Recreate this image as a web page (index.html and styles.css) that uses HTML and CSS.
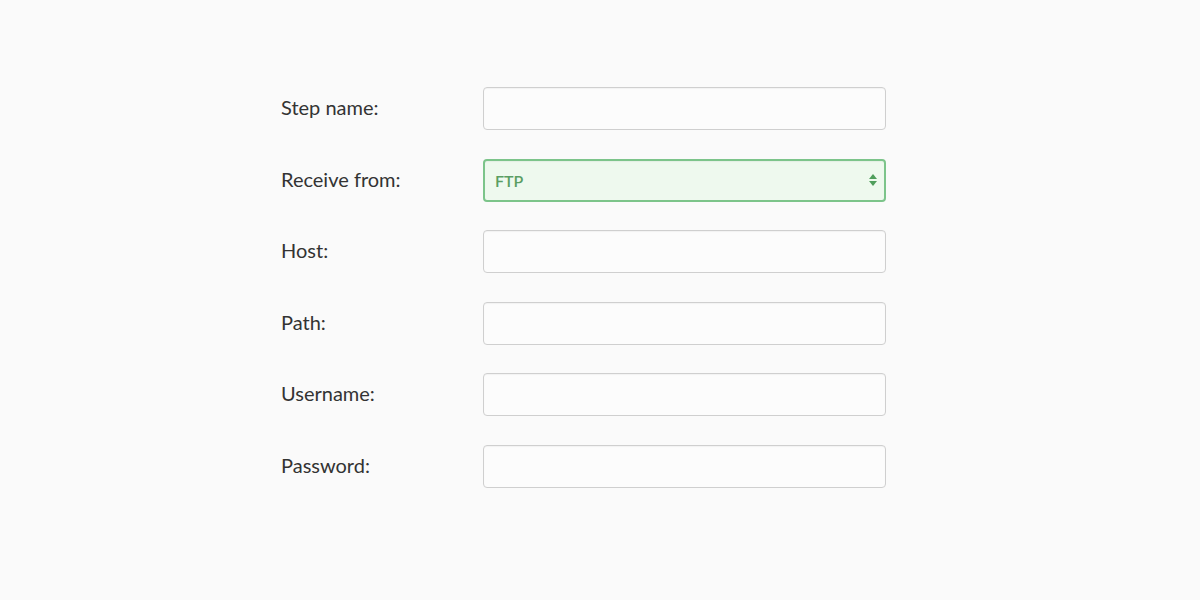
FILE: index.html
```html
<!DOCTYPE html>
<html>
<head>
<meta charset="utf-8">
<link rel="stylesheet" href="styles.css">
</head>
<body>
<form class="form">
  <label class="label">Step name:</label>
  <div class="field"></div>
  <label class="label">Receive from:</label>
  <div class="field select"><span class="value">FTP</span>
    <svg class="arrows" width="8" height="12" viewBox="0 0 8 12"><path d="M4 0 L8 5 L0 5 Z" fill="#4f9e5b"/><path d="M0 7 L8 7 L4 12 Z" fill="#4f9e5b"/></svg>
  </div>
  <label class="label">Host:</label>
  <div class="field"></div>
  <label class="label">Path:</label>
  <div class="field"></div>
  <label class="label">Username:</label>
  <div class="field"></div>
  <label class="label">Password:</label>
  <div class="field"></div>
</form>
</body>
</html>
```
FILE: styles.css
```css
html, body {
  margin: 0;
  padding: 0;
  background: #fafafa;
  width: 1200px;
  height: 600px;
  overflow: hidden;
}
.form {
  display: grid;
  grid-template-columns: 202px 403px;
  grid-auto-rows: 43px;
  row-gap: 28.6px;
  padding: 87px 0 0 281px;
  font-family: Lato, "Open Sans", sans-serif;
}
.label {
  display: flex;
  align-items: center;
  font-size: 20px;
  color: #333;
  padding-bottom: 3px;
}
.field {
  box-sizing: border-box;
  border: 1.5px solid #cfcfcf;
  border-radius: 4px;
  background: #fcfcfc;
  box-shadow: inset 0 1px 1px rgba(0,0,0,0.04);
}
.select {
  border: 2px solid #7cc48a;
  background: #eef9ee;
  display: flex;
  align-items: center;
  justify-content: space-between;
  padding: 0 7px 0 10px;
}
.value {
  color: #5a9e63;
  font-size: 16px;
  font-weight: 600;
}
.arrows {
  display: block;
}
```
